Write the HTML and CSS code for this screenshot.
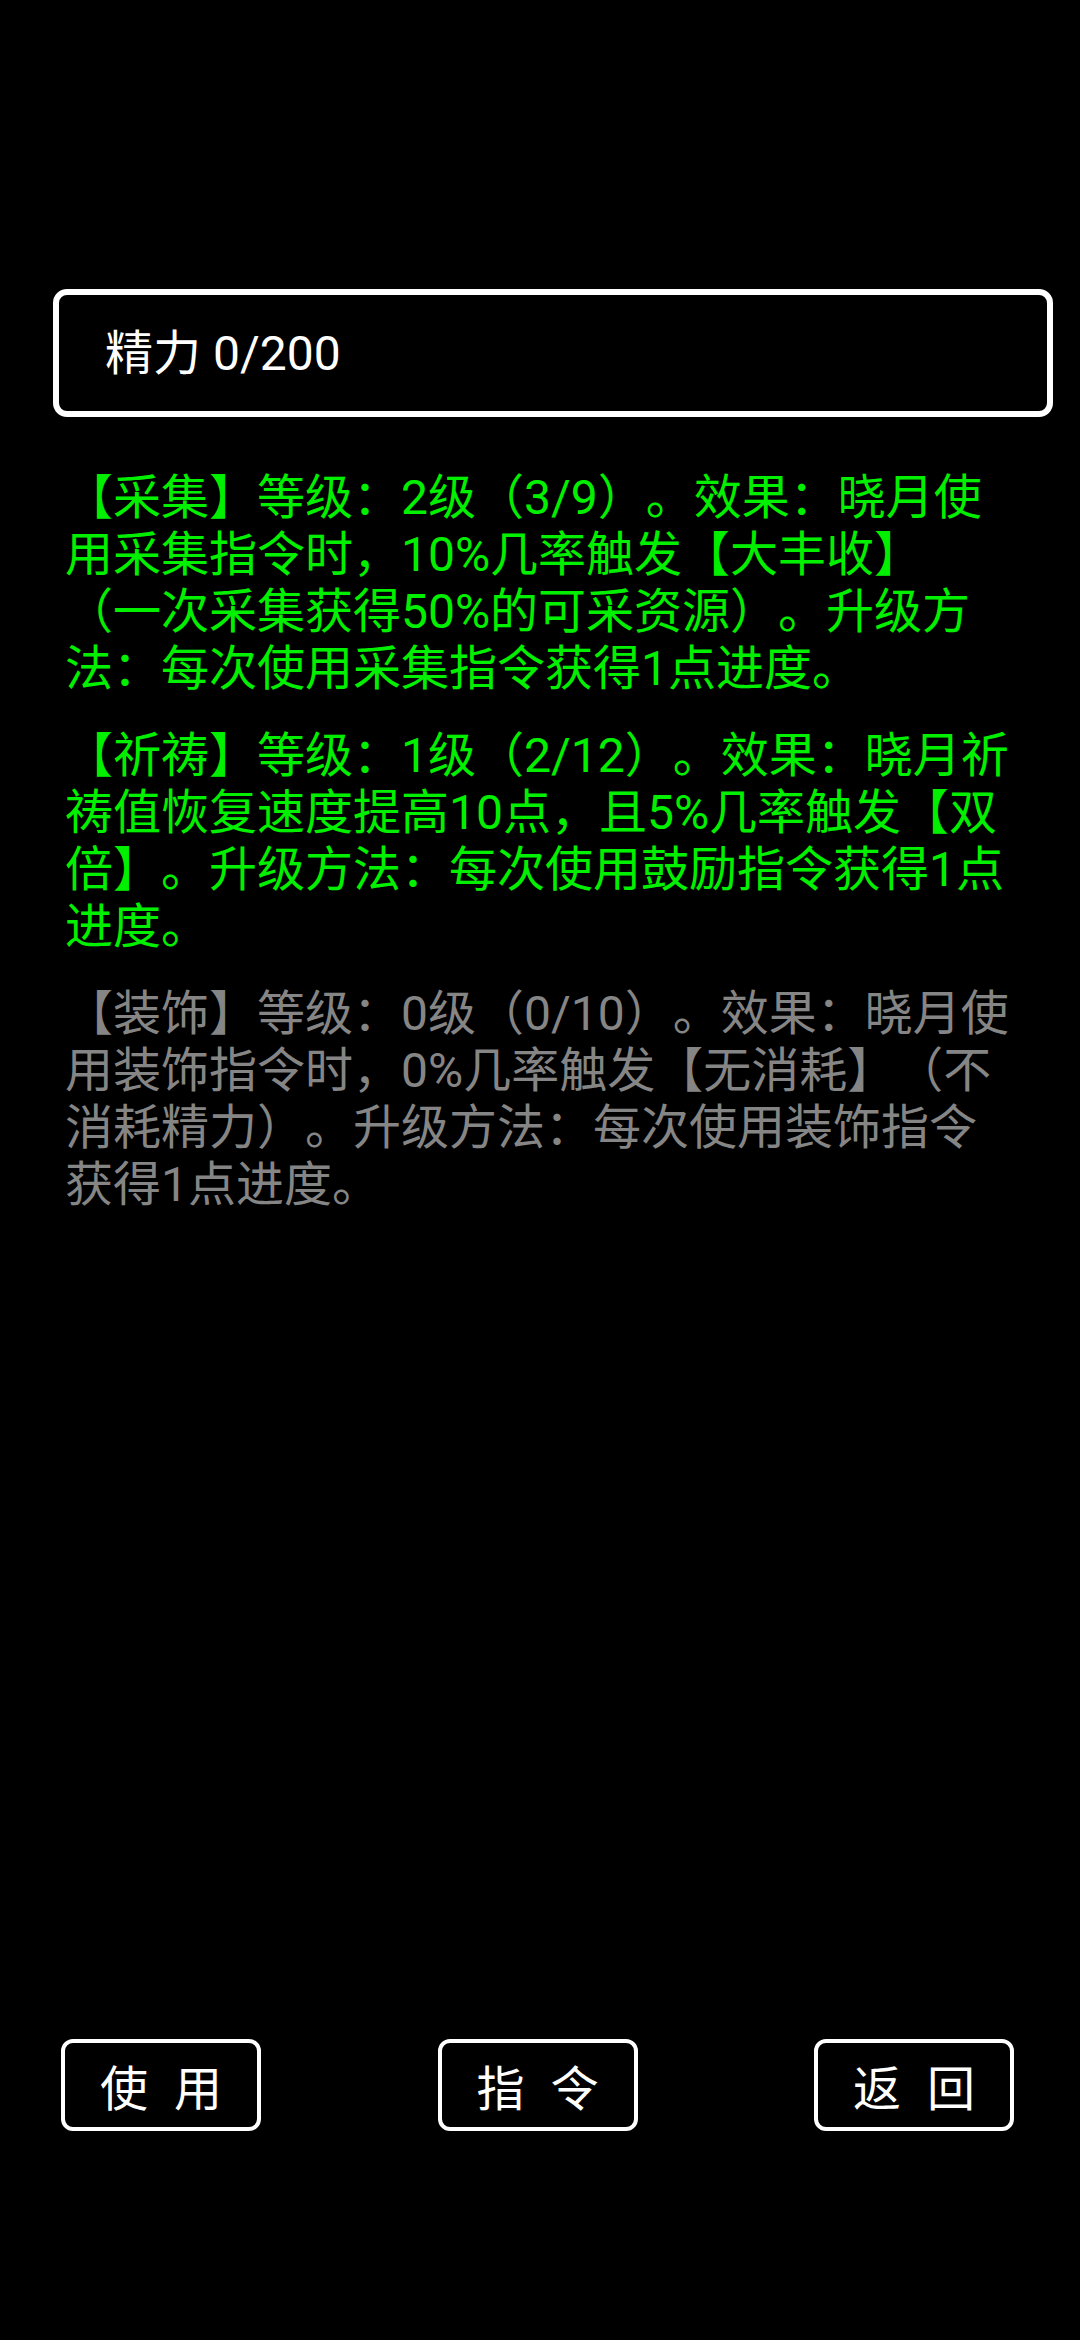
FILE: index.html
```html
<!DOCTYPE html>
<html lang="zh-CN">
<head>
<meta charset="utf-8">
<title>技能</title>
<link rel="stylesheet" href="styles.css">
</head>
<body>
<div class="page">
  <div class="stat">精力 0/200</div>
  <div class="skills">
    <p class="skill active">【采集】等级：2级（3/9）。效果：晓月使用采集指令时，10%几率触发【大丰收】（一次采集获得50%的可采资源）。升级方法：每次使用采集指令获得1点进度。</p>
    <p class="skill active">【祈祷】等级：1级（2/12）。效果：晓月祈祷值恢复速度提高10点，且5%几率触发【双倍】。升级方法：每次使用鼓励指令获得1点进度。</p>
    <p class="skill inactive">【装饰】等级：0级（0/10）。效果：晓月使用装饰指令时，0%几率触发【无消耗】（不消耗精力）。升级方法：每次使用装饰指令获得1点进度。</p>
  </div>
  <div class="actions">
    <div class="btn">使用</div>
    <div class="btn">指令</div>
    <div class="btn">返回</div>
  </div>
</div>
</body>
</html>
```
FILE: styles.css
```css
html, body {
  margin: 0;
  padding: 0;
  background: #000;
}

body {
  font-family: Roboto, "Noto Sans CJK SC", sans-serif;
  color: #fff;
  text-spacing-trim: space-all;
}

.page {
  min-height: 2340px;
  box-sizing: border-box;
  padding-top: 289px;
  display: flex;
  flex-direction: column;
}

.stat {
  margin: 0 27px 0 53px;
  height: 128px;
  box-sizing: border-box;
  border: 6px solid #fff;
  border-radius: 14px;
  display: flex;
  align-items: center;
  padding-left: 46px;
  font-size: 48px;
  line-height: 57px;
}

.skills {
  padding: 52px 0 0 65px;
  width: 946px;
}

.skill {
  margin: 0 0 30px;
  font-size: 48px;
  line-height: 57px;
}

.active {
  color: #00f000;
}

.inactive {
  color: #858585;
}

.actions {
  margin-top: auto;
  padding: 0 66px 209px 61px;
  display: flex;
  justify-content: space-between;
}

.btn {
  width: 200px;
  height: 92px;
  box-sizing: border-box;
  border: 4px solid #fff;
  border-radius: 12px;
  display: flex;
  align-items: center;
  justify-content: center;
  font-size: 48px;
  letter-spacing: 26px;
  padding-left: 26px;
}
```
